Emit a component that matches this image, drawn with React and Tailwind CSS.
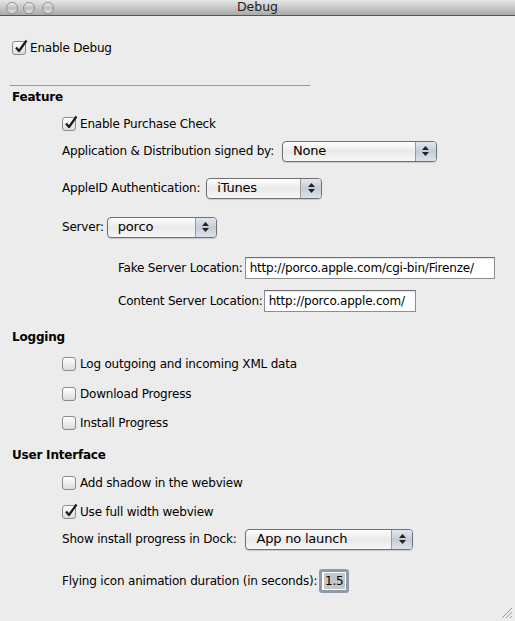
import React from 'react';

const font = { fontFamily: '"DejaVu Sans", "Liberation Sans", sans-serif' };

function CheckBox({ checked }) {
  return (
    <span className="relative w-[14px] h-[14px] flex-shrink-0 rounded-[3px] border border-[#8b8b8b] bg-gradient-to-b from-[#ffffff] to-[#dcdcdc] shadow-[inset_0_1px_0_#fff]">
      {checked && (
        <svg className="absolute left-[1px] top-[-3px]" width="14" height="15" viewBox="0 0 14 15">
          <path d="M2 8.5 L5 12 L12.5 1.5" fill="none" stroke="#1a1a1a" strokeWidth="2.2" strokeLinejoin="round" />
        </svg>
      )}
    </span>
  );
}

function CheckRow({ checked, label, className = '' }) {
  return (
    <div className={`h-[22px] flex items-center gap-[4px] pl-[62px] ${className}`}>
      <CheckBox checked={checked} />
      <span>{label}</span>
    </div>
  );
}

function Popup({ value, width }) {
  return (
    <div
      className="h-[21px] flex items-stretch rounded-[4px] border border-[#6f6f6f] bg-gradient-to-b from-[#ffffff] via-[#e9e9e9] to-[#f7f7f7] shadow-[0_1px_1px_rgba(0,0,0,0.15)] overflow-hidden"
      style={{ width }}
    >
      <span className="flex-1 pl-[10px] flex items-center text-[13px]">{value}</span>
      <span className="w-[21px] flex flex-col items-center justify-center gap-[2px] border-l border-[#9a9a9a] bg-gradient-to-b from-[#e3e8ef] via-[#c3ccd7] to-[#dde3ea]">
        <svg width="7" height="4" viewBox="0 0 7 4"><path d="M3.5 0 L7 4 L0 4Z" fill="#222" /></svg>
        <svg width="7" height="4" viewBox="0 0 7 4"><path d="M0 0 L7 0 L3.5 4Z" fill="#222" /></svg>
      </span>
    </div>
  );
}

function Field({ value, width }) {
  return (
    <div
      className="h-[22px] flex items-center border border-[#8e8e8e] border-t-[#6f6f6f] bg-white pl-[4px] shadow-[inset_0_1px_1px_rgba(0,0,0,0.1)]"
      style={{ width }}
    >
      {value}
    </div>
  );
}

export default function App() {
  return (
    <div className="w-[515px] h-[621px] bg-[#ececec] text-[12px] tracking-[-0.2px] text-black flex flex-col relative overflow-hidden" style={font}>
      <div className="h-[16px] flex-shrink-0 relative flex items-center justify-center border-b border-[#555] bg-gradient-to-b from-[#e6e6e6] to-[#a9a9a9]">
        <div className="absolute left-[6px] top-[2px] flex gap-[5px]">
          {[0, 1, 2].map((i) => (
            <span
              key={i}
              className={`w-[12px] h-[12px] rounded-full border border-[#8f8f8f] bg-gradient-to-b from-[#f2f2f2] via-[#bcbcbc] to-[#e6e6e6] ${i === 2 ? 'ml-[2px]' : ''}`}
            />
          ))}
        </div>
        <span className="text-[12.5px] text-[#222] leading-none tracking-normal">Debug</span>
      </div>

      <div className="mt-[21px] h-[22px] flex items-center gap-[4px] pl-[12px]">
        <CheckBox checked />
        <span>Enable Debug</span>
      </div>

      <div className="mt-[26px] ml-[10px] w-[300px] h-px bg-[#9a9a9a]" />

      <div className="h-[22px] flex items-center pl-[12px] font-bold">Feature</div>
      <CheckRow checked label="Enable Purchase Check" className="mt-[5px]" />
      <div className="mt-[5px] h-[22px] flex items-center gap-[8px] pl-[62px]">
        <span>Application &amp; Distribution signed by:</span>
        <Popup value="None" width={155} />
      </div>
      <div className="mt-[15px] h-[22px] flex items-center gap-[6px] pl-[62px]">
        <span>AppleID Authentication:</span>
        <Popup value="iTunes" width={116} />
      </div>
      <div className="mt-[17px] h-[22px] flex items-center gap-[3px] pl-[62px]">
        <span>Server:</span>
        <Popup value="porco" width={110} />
      </div>
      <div className="mt-[19px] h-[22px] flex items-center gap-[2px] pl-[118px]">
        <span>Fake Server Location:</span>
        <Field value="http://porco.apple.com/cgi-bin/Firenze/" width={250} />
      </div>
      <div className="mt-[11px] h-[22px] flex items-center gap-[1px] pl-[118px]">
        <span>Content Server Location:</span>
        <Field value="http://porco.apple.com/" width={152} />
      </div>

      <div className="mt-[14px] h-[22px] flex items-center pl-[12px] font-bold">Logging</div>
      <CheckRow label="Log outgoing and incoming XML data" className="mt-[5px]" />
      <CheckRow label="Download Progress" className="mt-[8px]" />
      <CheckRow label="Install Progress" className="mt-[7px]" />

      <div className="mt-[10px] h-[22px] flex items-center pl-[12px] font-bold">User Interface</div>
      <CheckRow label="Add shadow in the webview" className="mt-[6px]" />
      <CheckRow checked label="Use full width webview" className="mt-[7px]" />
      <div className="mt-[5px] h-[22px] flex items-center gap-[9px] pl-[62px]">
        <span>Show install progress in Dock:</span>
        <Popup value="App no launch" width={168} />
      </div>
      <div className="mt-[19px] h-[24px] flex items-center gap-[2px] pl-[62px]">
        <span>Flying icon animation duration (in seconds):</span>
        <div className="w-[30px] h-[24px] rounded-[3px] border-[3px] border-[#8d9aa8] bg-white flex items-center justify-center">
          <span className="bg-[#c6c6c6] px-[1px] leading-[16px]">1.5</span>
        </div>
      </div>

      <svg className="absolute right-[2px] bottom-[2px]" width="12" height="12" viewBox="0 0 12 12">
        <path d="M11 1 L1 11 M11 5 L5 11 M11 9 L9 11" stroke="#9a9a9a" strokeWidth="1" />
      </svg>
    </div>
  );
}
